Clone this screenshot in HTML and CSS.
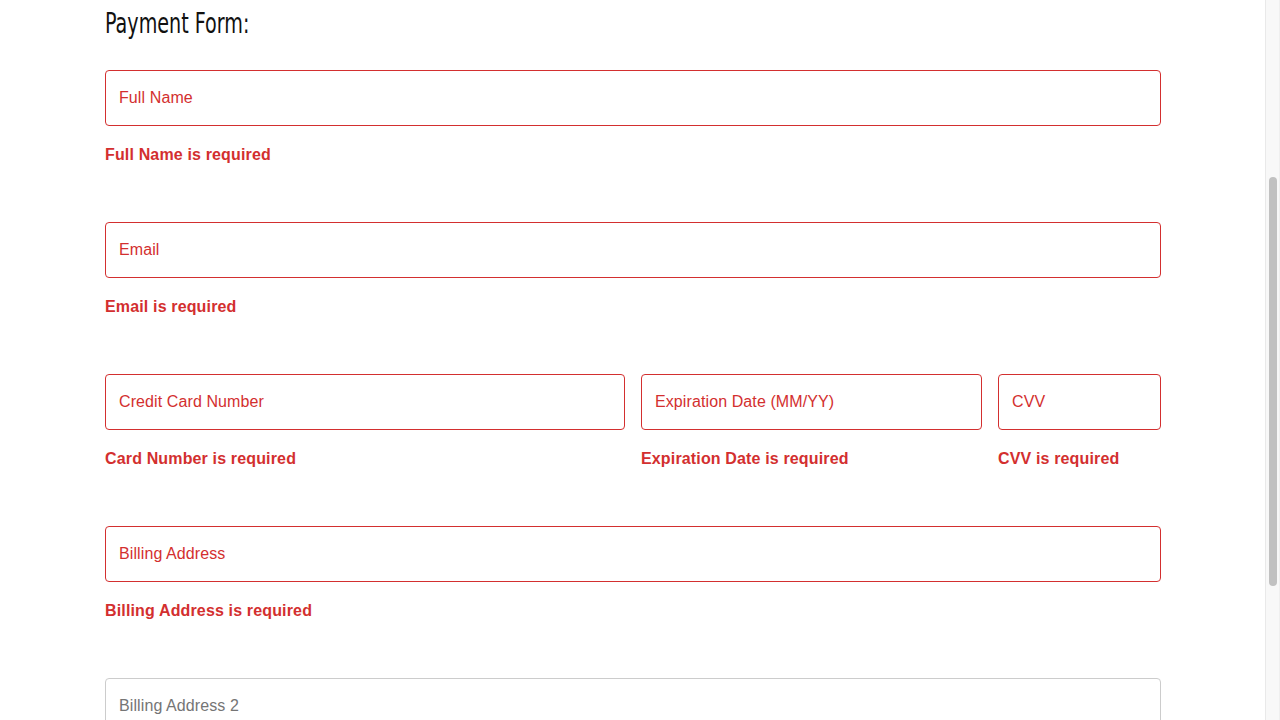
FILE: index.html
```html
<!DOCTYPE html>
<html lang="en">
<head>
<meta charset="utf-8">
<title>Payment Form</title>
<link rel="stylesheet" href="styles.css">
</head>
<body>
<main class="page">
  <h1 class="title"><span class="title-text">Payment Form:</span></h1>
  <form class="form" novalidate>
    <div class="group">
      <input class="field invalid" type="text" placeholder="Full Name">
      <div class="error">Full Name is required</div>
    </div>
    <div class="group">
      <input class="field invalid" type="email" placeholder="Email">
      <div class="error">Email is required</div>
    </div>
    <div class="row">
      <div class="group">
        <input class="field invalid" type="text" placeholder="Credit Card Number">
        <div class="error">Card Number is required</div>
      </div>
      <div class="group">
        <input class="field invalid" type="text" placeholder="Expiration Date (MM/YY)">
        <div class="error">Expiration Date is required</div>
      </div>
      <div class="group">
        <input class="field invalid" type="text" placeholder="CVV">
        <div class="error">CVV is required</div>
      </div>
    </div>
    <div class="group">
      <input class="field invalid" type="text" placeholder="Billing Address">
      <div class="error">Billing Address is required</div>
    </div>
    <div class="group last">
      <input class="field" type="text" placeholder="Billing Address 2">
    </div>
    <button class="submit" type="submit">Submit Payment</button>
  </form>
</main>
<div class="scrollbar" aria-hidden="true"><div class="scrollbar-thumb"></div></div>
<script src="script.js"></script>
</body>
</html>
```
FILE: styles.css
```css
html, body {
  margin: 0;
  padding: 0;
  background: #fff;
}
body {
  padding-right: 14px;
  font-family: "Liberation Sans", Arial, sans-serif;
  color: #212529;
}
.scrollbar {
  position: fixed;
  top: 0;
  right: 0;
  bottom: 0;
  width: 14px;
  background: #f8f8f8;
  border-left: 1px solid #e9e9e9;
  box-shadow: inset -1px 0 0 #efefef;
}
.scrollbar-thumb {
  position: absolute;
  top: 177px;
  left: 3px;
  width: 8px;
  height: 409px;
  border-radius: 4px;
  background: #c1c1c1;
}
.page {
  width: 1056px;
  margin: 0 auto;
  padding: 318px 0 142px;
  box-sizing: content-box;
}
.title {
  margin: 0 0 29px;
  font-family: "DejaVu Sans Condensed", "DejaVu Sans", sans-serif;
  font-weight: normal;
  font-size: 28px;
  line-height: 34px;
  color: #111;
}
.title-text {
  display: inline-block;
  transform: scaleX(0.76);
  transform-origin: left center;
  white-space: nowrap;
}
.form {
  display: flex;
  flex-direction: column;
}
.group {
  display: flex;
  flex-direction: column;
  margin-bottom: 55px;
  min-width: 0;
}
.group.last {
  margin-bottom: 32px;
}
.row {
  display: grid;
  grid-template-columns: 520px 341px 1fr;
  column-gap: 16px;
}
.field {
  box-sizing: border-box;
  width: 100%;
  height: 56px;
  padding: 0 13px;
  border: 1px solid #ccc;
  border-radius: 4px;
  font-family: "Liberation Sans", Arial, sans-serif;
  font-size: 16px;
  letter-spacing: 0.1px;
  color: #333;
  background: #fff;
  outline: none;
}
.field::placeholder {
  color: #757575;
}
.field.invalid {
  border-color: #d32f2f;
}
.field.invalid::placeholder {
  color: #d32f2f;
}
.error {
  margin-top: 17px;
  font-size: 16px;
  line-height: 24px;
  font-weight: bold;
  letter-spacing: 0.15px;
  color: #d32f2f;
}
.submit {
  align-self: flex-start;
  height: 48px;
  padding: 0 24px;
  border: none;
  border-radius: 4px;
  background: #1976d2;
  color: #fff;
  font-family: "Liberation Sans", Arial, sans-serif;
  font-size: 16px;
  font-weight: bold;
}
```
FILE: script.js
```js
window.scrollTo(0, 311);
```
